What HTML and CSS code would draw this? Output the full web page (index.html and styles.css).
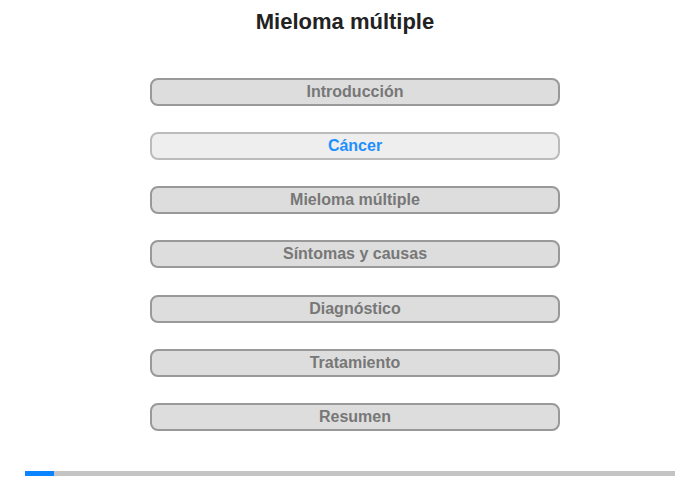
FILE: index.html
```html
<!DOCTYPE html>
<html lang="es">
<head>
    <meta charset="UTF-8">
    <meta name="viewport" content="width=device-width, initial-scale=1.0">
    <title>Mieloma múltiple</title>
    <link rel="stylesheet" href="styles.css">
</head>
<body>
    <div class="page">
        <h1 class="title">Mieloma múltiple</h1>

        <div class="menu">
            <button class="menu-item">Introducción</button>
            <button class="menu-item active">Cáncer</button>
            <button class="menu-item">Mieloma múltiple</button>
            <button class="menu-item">Síntomas y causas</button>
            <button class="menu-item">Diagnóstico</button>
            <button class="menu-item">Tratamiento</button>
            <button class="menu-item">Resumen</button>
        </div>

        <div class="progress">
            <div class="progress-fill" style="width: 29px"></div>
        </div>
    </div>
</body>
</html>
```

FILE: styles.css
```css
body {
    font-family: 'Liberation Sans', Arial, sans-serif;
    margin: 0;
    background: white;
}
.page {
    width: 700px;
    height: 480px;
    display: flex;
    flex-direction: column;
}
.title {
    margin: 9px 0 0 0;
    padding-right: 10px;
    font-size: 22px;
    line-height: 26px;
    font-weight: bold;
    color: #222;
    text-align: center;
}
.menu {
    display: flex;
    flex-direction: column;
    gap: 26.17px;
    margin-top: 43px;
    padding-left: 150px;
}
.menu-item {
    width: 410px;
    height: 28px;
    padding: 0;
    background: #dddddd;
    border: 2px solid #999;
    border-radius: 8px;
    font-family: inherit;
    font-size: 16px;
    font-weight: bold;
    color: #777;
    cursor: pointer;
}
.menu-item.active {
    background: #eeeeee;
    border-color: #bbb;
    color: #1e90ff;
}
.progress {
    margin: auto 25px 4px 25px;
    height: 5px;
    background: #c4c4c4;
}
.progress-fill {
    height: 100%;
    background: #0a84ff;
}
```
